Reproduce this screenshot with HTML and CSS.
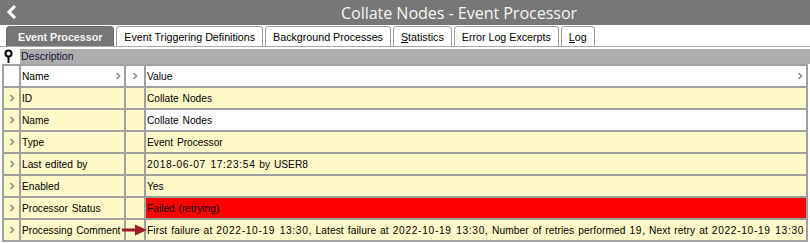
FILE: index.html
```html
<!DOCTYPE html>
<html>
<head>
<meta charset="utf-8">
<link rel="stylesheet" href="styles.css">
</head>
<body>
<div class="titlebar">
  <svg class="back" width="14" height="16" viewBox="0 0 14 16"><polyline points="10,2 4,8 10,14" fill="none" stroke="#fff" stroke-width="3"/></svg>
  <span class="title">Collate Nodes - Event Processor</span>
</div>
<div class="tabs">
  <div class="tab active">Event Processor</div>
  <div class="tab">Event Triggering Definitions</div>
  <div class="tab">Background Processes</div>
  <div class="tab"><u>S</u>tatistics</div>
  <div class="tab">Error Log Excerpts</div>
  <div class="tab"><u>L</u>og</div>
</div>
<div class="desc">
  <div class="pin"><svg width="10" height="15" viewBox="0 0 10 15"><circle cx="4.5" cy="4.5" r="3" fill="#fff" stroke="#000" stroke-width="2"/><line x1="4.5" y1="7.5" x2="4.5" y2="14" stroke="#000" stroke-width="2"/></svg></div>
  <div class="desc-label">Description</div>
</div>
<div class="grid">
  <div class="c ind white"></div>
  <div class="c white hchev">Name<svg class="chev" width="6" height="8" viewBox="0 0 6 8"><polyline points="1.5,1 4.5,4 1.5,7" fill="none" stroke="#8c8c8c" stroke-width="1.6"/></svg></div>
  <div class="c white center"><svg class="chev" width="6" height="8" viewBox="0 0 6 8"><polyline points="1.5,1 4.5,4 1.5,7" fill="none" stroke="#8c8c8c" stroke-width="1.6"/></svg></div>
  <div class="c white hchev">Value<svg class="chev" width="6" height="8" viewBox="0 0 6 8"><polyline points="1.5,1 4.5,4 1.5,7" fill="none" stroke="#8c8c8c" stroke-width="1.6"/></svg></div>

  <div class="c ind"><svg class="chev" width="6" height="8" viewBox="0 0 6 8"><polyline points="1.5,1 4.5,4 1.5,7" fill="none" stroke="#8c8c8c" stroke-width="1.6"/></svg></div>
  <div class="c">ID</div><div class="c"></div><div class="c">Collate Nodes</div>

  <div class="c ind"><svg class="chev" width="6" height="8" viewBox="0 0 6 8"><polyline points="1.5,1 4.5,4 1.5,7" fill="none" stroke="#8c8c8c" stroke-width="1.6"/></svg></div>
  <div class="c">Name</div><div class="c"></div><div class="c white">Collate Nodes</div>

  <div class="c ind"><svg class="chev" width="6" height="8" viewBox="0 0 6 8"><polyline points="1.5,1 4.5,4 1.5,7" fill="none" stroke="#8c8c8c" stroke-width="1.6"/></svg></div>
  <div class="c">Type</div><div class="c"></div><div class="c">Event Processor</div>

  <div class="c ind"><svg class="chev" width="6" height="8" viewBox="0 0 6 8"><polyline points="1.5,1 4.5,4 1.5,7" fill="none" stroke="#8c8c8c" stroke-width="1.6"/></svg></div>
  <div class="c">Last edited by</div><div class="c"></div><div class="c"><span class="num">2018-06-07 17:23:54</span>&nbsp;by USER8</div>

  <div class="c ind"><svg class="chev" width="6" height="8" viewBox="0 0 6 8"><polyline points="1.5,1 4.5,4 1.5,7" fill="none" stroke="#8c8c8c" stroke-width="1.6"/></svg></div>
  <div class="c">Enabled</div><div class="c"></div><div class="c">Yes</div>

  <div class="c ind"><svg class="chev" width="6" height="8" viewBox="0 0 6 8"><polyline points="1.5,1 4.5,4 1.5,7" fill="none" stroke="#8c8c8c" stroke-width="1.6"/></svg></div>
  <div class="c">Processor Status</div><div class="c"></div><div class="c red">Failed (retrying)</div>

  <div class="c ind"><svg class="chev" width="6" height="8" viewBox="0 0 6 8"><polyline points="1.5,1 4.5,4 1.5,7" fill="none" stroke="#8c8c8c" stroke-width="1.6"/></svg></div>
  <div class="c has-arrow">Processing Comment<svg class="arrow" width="25" height="12" viewBox="0 0 25 12"><rect x="0" y="4.5" width="15" height="3" fill="#9e1c24"/><polygon points="13,0.5 25,6 13,11.5" fill="#9e1c24"/></svg></div>
  <div class="c"></div>
  <div class="c wide">First failure at&nbsp;<span class="num">2022-10-19 13:30</span>, Latest failure at&nbsp;<span class="num">2022-10-19 13:30</span>, Number of retries performed&nbsp;<span class="num">19</span>, Next retry at&nbsp;<span class="num">2022-10-19 13:30</span></div>
</div>
</body>
</html>
```
FILE: styles.css
```css
* { box-sizing: border-box; }
body {
  margin: 0;
  background: #fff;
  font-family: "Liberation Sans", Arial, sans-serif;
  font-size: 10.2px;
  color: #000;
}
.titlebar {
  height: 25px;
  background: #777777;
  display: flex;
  align-items: center;
  justify-content: center;
  padding-left: 108px;
  position: relative;
}
.back {
  position: absolute;
  left: 5px;
  top: 4px;
}
.title {
  color: #f4f4f4;
  font-family: "Open Sans", "Noto Sans", sans-serif;
  font-size: 16.2px;
  letter-spacing: -0.1px;
}
.tabs {
  height: 22px;
  display: flex;
  align-items: flex-end;
  gap: 2px;
  padding-left: 6px;
  border-bottom: 1px solid #a8a8a8;
}
.tab {
  height: 20px;
  padding: 0 7px;
  border: 1px solid #a0a0a0;
  border-bottom: none;
  border-radius: 4px 4px 0 0;
  display: flex;
  align-items: center;
  white-space: nowrap;
  font-size: 10.7px;
  color: #000;
}
.tab.active {
  background: #777777;
  border-color: #6a6a6a;
  color: #f4f4f4;
  font-weight: bold;
  padding: 0 11px;
}
.desc {
  margin-top: 2px;
  height: 15px;
  display: flex;
}
.pin {
  width: 20px;
  padding: 0 0 0 4px;
}
.desc-label {
  flex: 1;
  background: #adadad;
  color: #14143a;
  padding-left: 1px;
  line-height: 15px;
  font-size: 10.5px;
}
.grid {
  margin: 0 2px;
  display: grid;
  grid-template-columns: 15px 103px 18px 1fr;
  grid-auto-rows: 20px;
  gap: 2px;
  padding: 2px;
  background: #a0a0a0;
}
.c {
  background: #fff8c8;
  display: flex;
  align-items: center;
  padding-left: 1px;
  white-space: nowrap;
  overflow: hidden;
  word-spacing: 1px;
}
.c.wide { letter-spacing: 0.1px; }
.num { letter-spacing: 0.68px; }
.c.white { background: #fff; }
.c.red { background: #ff0000; }
.c.ind { justify-content: center; padding-left: 0; }
.c.center { justify-content: center; padding-left: 0; }
.c.hchev { justify-content: space-between; padding-right: 3px; }
.has-arrow { position: relative; overflow: visible; }
.arrow {
  position: absolute;
  left: 101px;
  top: 4px;
  z-index: 2;
}
```
